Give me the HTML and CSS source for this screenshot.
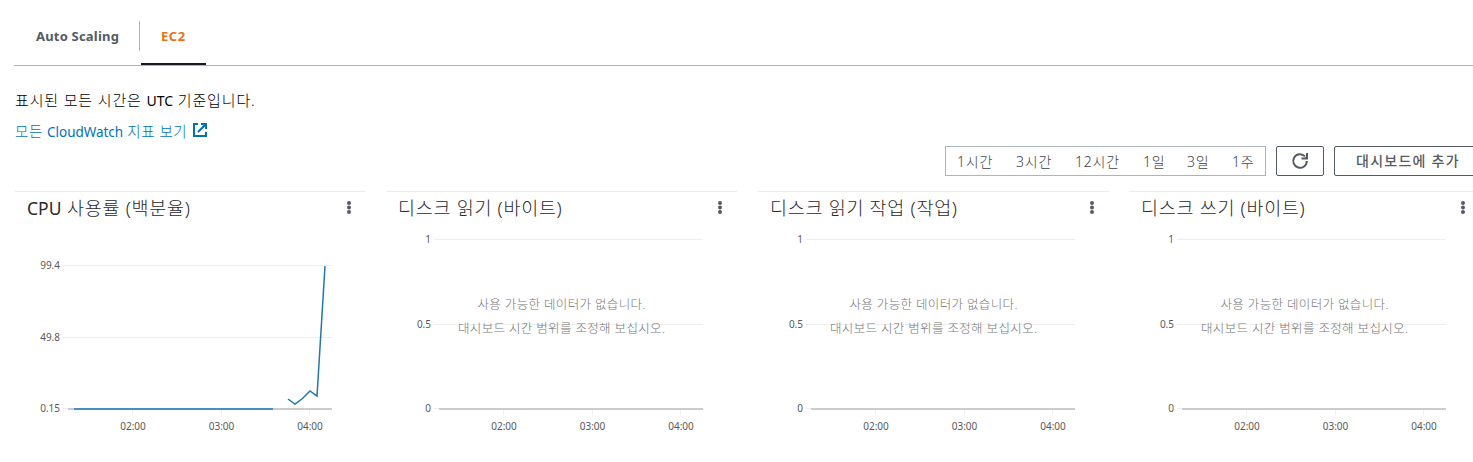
FILE: index.html
```html
<!DOCTYPE html>
<html lang="ko">
<head>
<meta charset="utf-8">
<title>EC2</title>
<link rel="stylesheet" href="styles.css">
</head>
<body>
<svg class="defs" width="0" height="0">
  <defs>
    <g id="frame">
      <path class="grid" d="M48 17.5H317M48 102.5H317M48 186.5H53M117.5 188V193M206.5 188V193M294.5 188V193"/>
      <path class="axis" d="M53 187H317"/>
    </g>
    <g id="more"><circle cx="3" cy="2" r="2"/><circle cx="3" cy="6.500" r="2"/><circle cx="3" cy="11" r="2"/></g>
  </defs>
</svg>
<nav class="tabs">
  <a class="tab"><span class="tab-name">Auto Scaling</span></a>
  <a class="tab active"><span class="tab-name">EC2</span></a>
</nav>
<main>
  <p class="note"><span class="note-text">표시된 모든 시간은 <span class="latin">UTC</span> 기준입니다.</span></p>
  <a class="link"><span class="link-text">모든 <span class="latin">CloudWatch</span> 지표 보기</span>
    <svg width="14" height="14" viewBox="0 0 14 14"><path d="M5 1H1V13H13V9M8 1H13V6M13 1L5 9"/></svg>
  </a>
  <div class="toolbar">
    <div class="ranges"><span class="r1">1시간</span><span class="r2">3시간</span><span class="r3">12시간</span><span class="r4">1일</span><span class="r5">3일</span><span class="r6">1주</span></div>
    <button class="btn refresh"><svg width="18" height="18" viewBox="0 0 18 18"><path d="M15.800 9A6.800 6.800 0 1 1 14 4.400"/><path class="tip" d="M17 1V7.500H10.500V5.500H14L15 4.500V1Z"/></svg></button>
    <button class="btn add"><span class="add-text">대시보드에 추가</span></button>
  </div>
  <div class="panels">
    <section class="panel">
      <header><h2 class="t1"><span class="latin">CPU</span> 사용률 (백분율)</h2><svg class="more" width="6" height="14"><use href="#more"/></svg></header>
      <svg class="chart" width="351" height="220">
        <path class="grid" d="M48 43.5H317M48 115.5H317M48 186.5H53M117.5 188V193M206.5 188V193M294.5 188V193"/>
        <path class="axis" d="M53 187H317"/>
        <path class="series flat" d="M59 187H258"/>
        <path class="series" d="M273 177L280 182L287.500 176.500L295 169L302 174L310 44"/>
        <g class="y"><text x="45" y="47">99.4</text><text x="45" y="119">49.8</text><text x="45" y="190">0.15</text></g>
        <g class="x"><text x="118" y="208">02:00</text><text x="206.500" y="208">03:00</text><text x="295" y="208">04:00</text></g>
      </svg>
    </section>
    <section class="panel">
      <header><h2 class="t2">디스크 읽기 (바이트)</h2><svg class="more" width="6" height="14"><use href="#more"/></svg></header>
      <svg class="chart" width="351" height="220">
        <use href="#frame"/>
        <g class="y"><text x="45" y="21">1</text><text x="45" y="106">0.5</text><text x="45" y="190">0</text></g>
        <g class="x"><text x="118" y="208">02:00</text><text x="206.500" y="208">03:00</text><text x="295" y="208">04:00</text></g>
        <g class="empty"><text x="91.500" y="87" textLength="168">사용 가능한 데이터가 없습니다.</text><text x="72" y="111" textLength="207">대시보드 시간 범위를 조정해 보십시오.</text></g>
      </svg>
    </section>
    <section class="panel">
      <header><h2 class="t3">디스크 읽기 작업 (작업)</h2><svg class="more" width="6" height="14"><use href="#more"/></svg></header>
      <svg class="chart" width="351" height="220">
        <use href="#frame"/>
        <g class="y"><text x="45" y="21">1</text><text x="45" y="106">0.5</text><text x="45" y="190">0</text></g>
        <g class="x"><text x="118" y="208">02:00</text><text x="206.500" y="208">03:00</text><text x="295" y="208">04:00</text></g>
        <g class="empty"><text x="91.500" y="87" textLength="168">사용 가능한 데이터가 없습니다.</text><text x="72" y="111" textLength="207">대시보드 시간 범위를 조정해 보십시오.</text></g>
      </svg>
    </section>
    <section class="panel">
      <header><h2 class="t4">디스크 쓰기 (바이트)</h2><svg class="more" width="6" height="14"><use href="#more"/></svg></header>
      <svg class="chart" width="351" height="220">
        <use href="#frame"/>
        <g class="y"><text x="45" y="21">1</text><text x="45" y="106">0.5</text><text x="45" y="190">0</text></g>
        <g class="x"><text x="118" y="208">02:00</text><text x="206.500" y="208">03:00</text><text x="295" y="208">04:00</text></g>
        <g class="empty"><text x="91.500" y="87" textLength="168">사용 가능한 데이터가 없습니다.</text><text x="72" y="111" textLength="207">대시보드 시간 범위를 조정해 보십시오.</text></g>
      </svg>
    </section>
  </div>
</main>
</body>
</html>
```

FILE: styles.css
```css
* { box-sizing: border-box; }
body {
  margin: 0;
  height: 462px;
  overflow: hidden;
  background: #fff;
  color: #16191f;
  font-family: "Noto Sans", "Noto Sans CJK KR", sans-serif;
  font-size: 14px;
}
.defs { display: block; }
.tabs {
  display: flex;
  height: 66px;
  margin-left: 14px;
  padding-top: 21px;
  border-bottom: 1px solid #aab7b8;
}
.tab {
  height: 44px;
  color: #545b64;
  font-size: 13px;
  font-weight: 700;
  letter-spacing: 0.2px;
  line-height: 30px;
  white-space: nowrap;
}
.tab:first-child {
  width: 126px;
  height: 30px;
  padding-left: 22px;
  border-right: 1px solid #aab7b8;
}
.tab.active {
  width: 65px;
  margin-left: 1px;
  padding-left: 20px;
  border-bottom: 2px solid #16191f;
  color: #ec7211;
  letter-spacing: 0.5px;
}
main { padding-left: 15px; }
.latin { font-weight: 400; }
.note {
  height: 24px;
  margin: 22px 0 0;
  color: #000;
  font-size: 15px;
  font-weight: 300;
  letter-spacing: 0.85px;
  line-height: 24px;
}
.note .latin { font-size: 14px; letter-spacing: 0; }
.link {
  display: flex;
  align-items: center;
  height: 24px;
  margin-top: 6px;
  color: #0073bb;
  font-size: 14.500px;
  font-weight: 300;
}
.link-text { width: 178px; letter-spacing: 0.55px; }
.link .latin { font-size: 13.500px; letter-spacing: -0.05px; }
.link path { fill: none; stroke: #0073bb; stroke-width: 2; }
.note-text, .link-text { white-space: nowrap; }
.toolbar {
  display: flex;
  width: 1480px;
  height: 30px;
  margin-top: 4px;
  padding-left: 930px;
}
.ranges {
  display: flex;
  width: 321px;
  padding-left: 11px;
  border: 1px solid #aab7b8;
  color: #3c434c;
  font-size: 14px;
  font-weight: 300;
  letter-spacing: 0.8px;
  line-height: 29px;
  white-space: nowrap;
}
.r1 { width: 59px; }
.r2 { width: 59px; }
.r3 { width: 68px; }
.r4 { width: 44px; }
.r5 { width: 45px; }
.btn {
  display: flex;
  align-items: center;
  justify-content: center;
  margin: 0;
  padding: 0;
  border: 1px solid #545b64;
  border-radius: 2px;
  background: #fff;
  color: #545b64;
  font: 500 14px/26px "Noto Sans", "Noto Sans CJK KR", sans-serif;
}
.refresh { width: 48px; margin-left: 10px; }
.refresh path { fill: none; stroke: #545b64; stroke-width: 2; }
.refresh .tip { fill: #545b64; stroke: none; }
.add {
  flex: none;
  width: 150px;
  margin-left: 10px;
  padding-left: 21px;
  justify-content: flex-start;
  letter-spacing: 1.25px;
  white-space: nowrap;
}
.panels {
  display: grid;
  grid-template-columns: 371px 372px 371px 351px;
  margin-top: 15px;
}
.panel { width: 351px; border-top: 1px solid #eaeded; }
header {
  display: flex;
  justify-content: space-between;
  height: 30px;
  padding: 0 14px 0 12px;
}
h2 {
  margin: 0;
  color: #2a2a2a;
  font-size: 18.500px;
  font-weight: 300;
  letter-spacing: 0.7px;
  line-height: 32px;
  white-space: nowrap;
}
.t1 .latin { font-size: 17.500px; letter-spacing: 0; }
.more { margin-top: 9px; fill: #545b64; }
.chart { display: block; }
.grid { fill: none; stroke: #eee; }
.axis { fill: none; stroke: #ccc; stroke-width: 2; }
.series { fill: none; stroke: #1f77b4; stroke-width: 1.500px; }
.flat { stroke: #4a8dc0; stroke-width: 2px; }
.x, .y { fill: #5a5a5a; font-size: 10px; }
.x { text-anchor: middle; }
.y { text-anchor: end; }
.empty { fill: #777; font-size: 12.500px; font-weight: 300; }
```
